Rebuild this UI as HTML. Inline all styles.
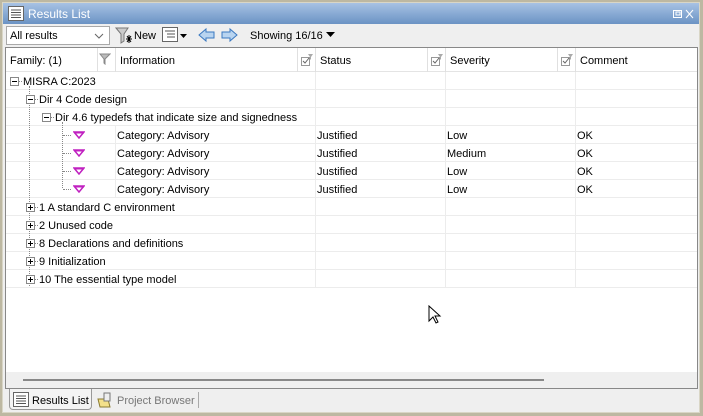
<!DOCTYPE html><html><head><style>
*{box-sizing:border-box;margin:0;padding:0}
body{width:703px;height:416px;overflow:hidden;background:#bdb8a2;font-family:"Liberation Sans",sans-serif;font-size:11px;color:#000;position:relative}
.a{position:absolute}
.t{white-space:nowrap}
</style></head><body>
<div class="a" style="left:2px;top:2px;width:698px;height:411px;background:#efefef;border:1px solid #d9d6c6"></div>
<div class="a" style="left:3px;top:3px;width:696px;height:21px;background:linear-gradient(#a7c2e4,#6b93c4)"></div>
<svg class="a" style="left:8px;top:6px" width="16" height="15"><rect x="0.5" y="0.5" width="15" height="14" fill="#fff" stroke="#666"/><g stroke="#555"><line x1="3" y1="4" x2="13" y2="4"/><line x1="3" y1="6.5" x2="13" y2="6.5"/><line x1="3" y1="9" x2="13" y2="9"/><line x1="3" y1="11.5" x2="13" y2="11.5"/></g></svg>
<div class="a t" style="left:28px;top:7px;color:#fff;font-size:12px">Results List</div>
<svg class="a" style="left:672px;top:9px" width="24" height="10"><rect x="1.5" y="1.5" width="8" height="7" fill="none" stroke="#fff"/><rect x="4" y="3" width="4" height="3" fill="none" stroke="#fff"/><path d="M14 1l7 8M21 1l-7 8" stroke="#fff"/></svg>
<div class="a" style="left:6px;top:26px;width:104px;height:19px;background:#fff;border:1px solid #a9a9a9"></div>
<div class="a t" style="left:10px;top:30px;font-size:11px">All results</div>
<svg class="a" style="left:94px;top:32px" width="10" height="8"><path d="M1 2l4 4 4-4" stroke="#666" fill="none"/></svg>
<svg class="a" style="left:115px;top:26px" width="18" height="18"><path d="M1 2h12l-4 6v7l-3 2v-9z" fill="#ccc" stroke="#777"/><path d="M12 10l4 6M16 10l-4 6M11 13h6M14 9v8" stroke="#000"/></svg>
<div class="a t" style="left:134px;top:30px;font-size:11px">New</div>
<svg class="a" style="left:162px;top:27px" width="28" height="16"><rect x="0.5" y="0.5" width="15" height="14" fill="#fff" stroke="#666"/><g stroke="#555"><line x1="3" y1="4" x2="13" y2="4"/><line x1="5" y1="7" x2="13" y2="7"/><line x1="5" y1="10" x2="13" y2="10"/></g><path d="M18 7h7l-3.5 4z" fill="#000"/></svg>
<svg class="a" style="left:198px;top:27px" width="42" height="16"><path d="M1 8l7-6v3h8v6h-8v3z" fill="#b8d4f0" stroke="#3a78c0"/><path d="M39 8l-7-6v3h-8v6h8v3z" fill="#b8d4f0" stroke="#3a78c0"/></svg>
<div class="a t" style="left:250px;top:30px;font-size:11px">Showing 16/16</div>
<svg class="a" style="left:326px;top:32px" width="10" height="6"><path d="M0 0h9l-4.5 5z" fill="#000"/></svg>
<div class="a" style="left:5px;top:47px;width:693px;height:342px;background:#fff;border:1px solid #888"></div>
<div class="a" style="left:6px;top:48px;width:691px;height:24px;background:#fff;border-bottom:1px solid #e4e4e4"></div>
<div class="a" style="left:6px;top:372px;width:691px;height:16px;background:#efefef"></div>
<div class="a" style="left:23px;top:379px;width:521px;height:2px;background:#888"></div>
<div id="g"></div>
<div class="a" style="left:9px;top:389px;width:83px;height:21px;border:1px solid #999;border-top:none;border-radius:0 0 4px 4px;background:#f4f4f4"></div>
<svg class="a" style="left:13px;top:392px" width="16" height="15"><rect x="0.5" y="0.5" width="15" height="14" fill="#fff" stroke="#666"/><g stroke="#555"><line x1="3" y1="4" x2="13" y2="4"/><line x1="3" y1="6.5" x2="13" y2="6.5"/><line x1="3" y1="9" x2="13" y2="9"/><line x1="3" y1="11.5" x2="13" y2="11.5"/></g></svg>
<div class="a t" style="left:32px;top:395px;font-size:11px">Results List</div>
<svg class="a" style="left:97px;top:391px" width="18" height="17"><path d="M1 8h10l2 8H3z" fill="#f3e08a" stroke="#8a7a30"/><rect x="7" y="2" width="6" height="8" fill="#eee" stroke="#777"/></svg>
<div class="a t" style="left:117px;top:395px;font-size:11px;color:#777">Project Browser</div>
<div class="a" style="left:198px;top:392px;width:1px;height:16px;background:#aaa"></div>
<svg class="a" style="left:428px;top:305px" width="14" height="20"><path d="M1 1v15l4-4 3 6 2-1-3-6h5z" fill="#fff" stroke="#000"/></svg>
<script>
var h='';
function A(s){h+=s}
var hd=[[10,'Family: (1)'],[120,'Information'],[320,'Status'],[450,'Severity'],[580,'Comment']];
hd.forEach(function(x){A('<div class="a t" style="left:'+x[0]+'px;top:55px;font-size:11px">'+x[1]+'</div>')});
[97,115,297,315,427,445,557,575].forEach(function(x){A('<div class="a" style="left:'+x+'px;top:48px;width:1px;height:24px;background:#e0e0e0"></div>')});
A('<svg class="a" style="left:99px;top:53px" width="12" height="12"><path d="M1 1h10l-5 5v5l-1-1V6z" fill="#bbb" stroke="#888"/></svg>');
[298,428,558].forEach(function(x){A('<svg class="a" style="left:'+(x+2)+'px;top:53px" width="14" height="14"><rect x="1.5" y="4.5" width="8" height="8" fill="#fff" stroke="#999"/><path d="M3 8l2 2 4-5" stroke="#666" fill="none"/><path d="M8 1h5l-2 3v3l-1-1V4z" fill="#aaa"/></svg>')});
for(var i=0;i<12;i++){var y=72+i*18;A('<div class="a" style="left:6px;top:'+(y+17)+'px;width:691px;height:1px;background:#ececec"></div>');}
[315,445,575].forEach(function(x){A('<div class="a" style="left:'+x+'px;top:72px;width:1px;height:216px;background:#ececec"></div>')});
A('<div class="a" style="left:115px;top:126px;width:1px;height:72px;background:#ececec"></div>');
function box(x,y,plus){A('<svg class="a" style="left:'+x+'px;top:'+y+'px" width="14" height="9"><rect x="0.5" y="0.5" width="8" height="8" fill="#fff" stroke="#888"/><line x1="2" y1="4.5" x2="7" y2="4.5" stroke="#000"/>'+(plus?'<line x1="4.5" y1="2" x2="4.5" y2="7" stroke="#000"/>':'')+'<line x1="9" y1="4.5" x2="13" y2="4.5" stroke="#888" stroke-dasharray="1 1"/></svg>')}
function txt(x,y,s){A('<div class="a t" style="left:'+x+'px;top:'+(y+4)+'px;font-size:11px">'+s+'</div>')}
box(10,77,0);txt(23,72,'MISRA C:2023');
A('<div class="a" style="left:29px;top:86px;width:0;height:200px;border-left:1px dotted #888"></div>');
box(26,95,0);txt(39,90,'Dir 4 Code design');
box(42,113,0);txt(55,108,'Dir 4.6 typedefs that indicate size and signedness');
A('<div class="a" style="left:62px;top:122px;width:0;height:66px;border-left:1px dotted #888"></div>');
var st=['Low','Medium','Low','Low'];
for(var k=0;k<4;k++){var y=126+k*18;A('<div class="a" style="left:63px;top:'+(y+9)+'px;width:8px;border-top:1px dotted #888"></div>');
A('<svg class="a" style="left:73px;top:'+(y+5)+'px" width="12" height="8"><path d="M1 1h10l-5 6z" fill="none" stroke="#c020c0" stroke-width="1.5"/><line x1="1" y1="1.5" x2="11" y2="1.5" stroke="#c020c0" stroke-width="2"/></svg>');
txt(117,y,'Category: Advisory');txt(317,y,'Justified');txt(447,y,st[k]);txt(577,y,'OK');}
var g=['1 A standard C environment','2 Unused code','8 Declarations and definitions','9 Initialization','10 The essential type model'];
g.forEach(function(s,k){var y=198+k*18;box(26,y+5,1);txt(39,y,s)});
document.getElementById('g').innerHTML=h;
</script>
</body></html>
